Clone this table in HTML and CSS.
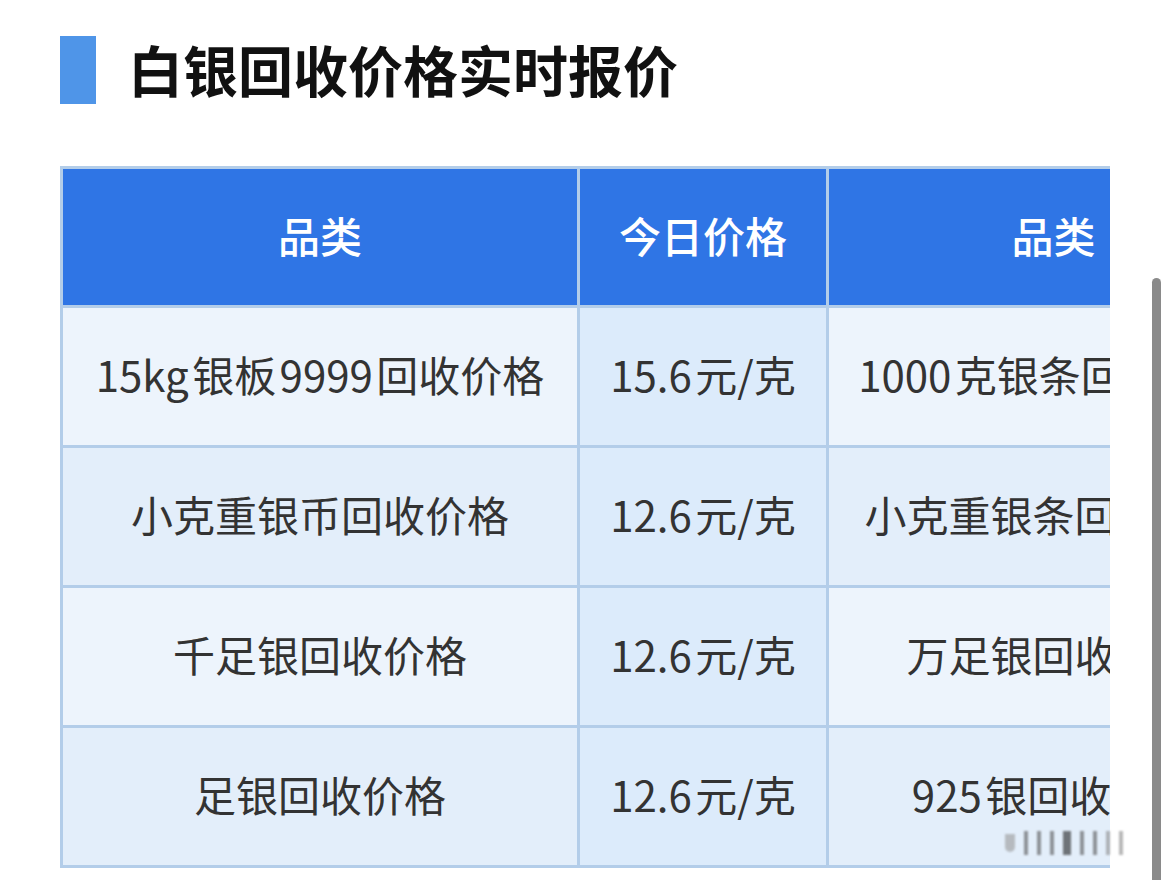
FILE: index.html
```html
<!DOCTYPE html>
<html lang="zh-CN">
<head>
<meta charset="utf-8">
<title>白银回收价格实时报价</title>
<link rel="stylesheet" href="styles.css">
</head>
<body>
<div class="page">
  <div class="title-row">
    <div class="title-bar"></div>
    <h1 class="title">白银回收价格实时报价</h1>
  </div>
  <div class="table-wrap">
    <table class="price-table">
      <colgroup>
        <col class="c-name">
        <col class="c-price">
        <col class="c-name2">
      </colgroup>
      <thead>
        <tr><th>品类</th><th>今日价格</th><th>品类</th></tr>
      </thead>
      <tbody>
        <tr class="odd"><td>15kg 银板 9999 回收价格</td><td class="price">15.6 元/克</td><td>1000 克银条回收价格</td></tr>
        <tr class="even"><td>小克重银币回收价格</td><td class="price">12.6 元/克</td><td>小克重银条回收价格</td></tr>
        <tr class="odd"><td>千足银回收价格</td><td class="price">12.6 元/克</td><td>万足银回收价格</td></tr>
        <tr class="even"><td>足银回收价格</td><td class="price">12.6 元/克</td><td>925 银回收价格</td></tr>
      </tbody>
    </table>
  </div>
  <div class="scroll-thumb"></div>
  <div class="watermark">
    <span class="wm w1"></span><span class="wm w2"></span><span class="wm w3"></span><span class="wm w4"></span><span class="wm w5"></span><span class="wm w6"></span><span class="wm w7"></span><span class="wm w8"></span><span class="wm w9"></span>
  </div>
</div>
</body>
</html>
```
FILE: styles.css
```css
html, body {
  margin: 0;
  padding: 0;
  background: #ffffff;
}
body {
  font-family: "Noto Sans CJK SC", "Noto Sans", sans-serif;
  width: 1170px;
  height: 880px;
  overflow: hidden;
}
.page {
  position: relative;
  width: 1170px;
  height: 880px;
  padding: 36px 0 0 60px;
  box-sizing: border-box;
}
.title-row {
  display: flex;
  align-items: center;
  height: 68px;
}
.title-bar {
  width: 36px;
  height: 68px;
  background: #4f95e8;
  flex: none;
}
.title {
  margin: -5px 0 0 32px;
  font-size: 55px;
  font-weight: 700;
  color: #111111;
  line-height: 68px;
  letter-spacing: 0;
}
.table-wrap {
  margin-top: 62px;
  width: 1050px;
  overflow: hidden;
}
.price-table {
  border-collapse: collapse;
  table-layout: fixed;
  width: 1218px;
}
.c-name { width: 517px; }
.c-price { width: 249px; }
.c-name2 { width: 452px; }
.price-table th,
.price-table td {
  border: 3px solid #b3cde9;
  text-align: center;
  vertical-align: middle;
  white-space: nowrap;
  overflow: hidden;
  padding: 0 0 6px 0;
  font-size: 42px;
  word-spacing: -6px;
}
.price-table th {
  height: 130px;
  background: #2f75e5;
  color: #ffffff;
  font-weight: 500;
}
.price-table td {
  height: 131px;
  color: #333333;
  font-weight: 400;
}
.price-table tr.odd td { background: #edf4fc; }
.price-table tr.even td { background: #e3eefa; }
.price-table tr td.price { background: #dcebfb; }
.scroll-thumb {
  position: absolute;
  left: 1152px;
  top: 278px;
  width: 9px;
  height: 620px;
  background: #8a8a8a;
  border-radius: 5px 5px 0 0;
}
.watermark {
  position: absolute;
  left: 935px;
  top: 828px;
  width: 210px;
  height: 30px;
  display: flex;
  align-items: center;
  gap: 9px;
  padding-left: 70px;
  box-sizing: border-box;
  opacity: 0.6;
  filter: blur(1px);
}
.wm {
  display: block;
  width: 4px;
  height: 24px;
  background: #555555;
}
.w1 { background: #999; width: 10px; border-radius: 0 0 6px 6px; height: 18px; }
.w5 { width: 8px; background: #222; }
.w8, .w9 { background: #888; }
```
